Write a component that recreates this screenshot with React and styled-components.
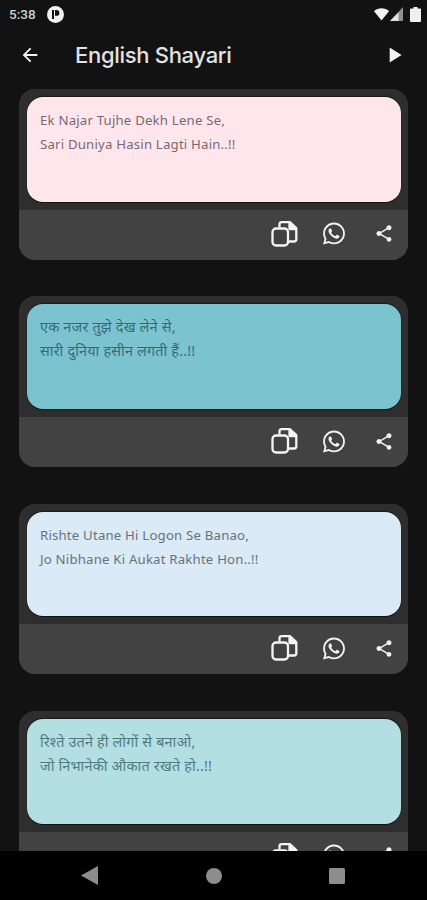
import React from "react";
import styled, { createGlobalStyle } from "styled-components";
import { FaWhatsapp } from "react-icons/fa";
import { MdShare, MdArrowBack, MdPlayArrow } from "react-icons/md";

const Global = createGlobalStyle`
  html, body { margin: 0; padding: 0; background: #121212; }
  * { box-sizing: border-box; }
`;
const Screen = styled.div`
  width: 427px; height: 900px; background: #121212; display: flex; flex-direction: column; overflow: hidden;
  font-family: "Lato", "Noto Sans", sans-serif;
`;
const StatusBar = styled.div`
  height: 28px; flex: none; padding: 0 6px 0 9px; display: flex; align-items: center; justify-content: space-between;
  color: #e4e4e4;
`;
const StatusLeft = styled.div`display: flex; align-items: center; gap: 11px;`;
const Time = styled.span`font: 500 13.5px "Roboto", sans-serif; color: #d0d0d0;`;
const StatusRight = styled.div`display: flex; align-items: center; gap: 1px;`;
const StatusGap = styled.span`width: 5px;`;
const Header = styled.header`
  height: 53px; flex: none; display: flex; align-items: center; padding: 0 20px 0 19px; color: #f0f0f0;
`;
const Title = styled.h1`
  margin: 0 0 0 34px; flex: 1; font: 500 22px "Inter", sans-serif; color: #e2e2e2; letter-spacing: -0.3px;
`;
const HeaderIcon = styled.span`display: flex; color: #f4f4f4;`;
const List = styled.main`
  flex: 1; min-height: 0; overflow: hidden; padding: 8px 19px 0; display: flex; flex-direction: column; gap: 36.7px;
`;
const Card = styled.article`
  flex: none; height: 170.700px; border-radius: 16px; overflow: hidden; background: #2e2e2e; display: flex; flex-direction: column;
`;
const QuoteWrap = styled.div`
  height: 120.700px; flex: none; padding: 8px 7px 8px 8px; background: #2e2e2e;
`;
const Quote = styled.div`
  height: 104.500px; border-radius: 16px; background: ${p => p.$bg}; color: ${p => p.$fg}; padding: 11px 13px;
  font: 400 ${p => (p.$hi ? "14.4px" : "13.2px")}/24px "Noto Sans", "Lato", sans-serif;
  box-shadow: 0 -1px 1px #0007, 0 1px 1px #0009;
`;
const Line = styled.div`white-space: nowrap; letter-spacing: 0.2px; opacity: .75;`;
const Actions = styled.div`
  height: 50px; flex: none; background: #424242; display: flex; align-items: center; justify-content: flex-end; padding: 0 14px 2px 0; color: #f2f2f2;
`;
const ActionIcon = styled.span`
  display: flex; width: ${p => p.$w}px; justify-content: center; margin-left: ${p => p.$ml || 0}px;
`;
const NavBar = styled.nav`
  height: 49px; flex: none; background: #000; display: flex; align-items: center; padding-left: 81px;
`;
const NavSlot = styled.span`display: flex; width: ${p => p.$w}px; justify-content: flex-start;`;

const CopyIcon = () => (
  <svg width="27" height="26" viewBox="0 0 27 26" fill="none" stroke="#f4f4f4" strokeWidth="2.3" strokeLinejoin="round">
    <path d="M8.500 6.500V3.500a2.300 2.300 0 0 1 2.300-2.300h8l6.500 6v11a2.300 2.300 0 0 1-2.300 2.300h-6.500" />
    <path d="M18.500 2v6h6z" fill="#f4f4f4" />
    <rect x="1.500" y="7.500" width="15.500" height="17" rx="3.500" fill="#424242" />
  </svg>
);
const Wifi = () => (
  <svg width="15" height="13" viewBox="0 0 15 13"><path d="M0 3.200C4-.6 11-.6 15 3.200L7.500 12.500z" fill="#f2f2f2" /></svg>
);
const Signal = () => (
  <svg width="13" height="14" viewBox="0 0 13 14">
    <path d="M13 0v14H0z" fill="#8f8f8f" /><path d="M8.500 5v9H0l8-8z" fill="#e4e4e4" />
  </svg>
);
const Battery = () => (
  <svg width="11" height="15" viewBox="0 0 11 15"><path d="M3.500 0h4v1.500H10a1 1 0 0 1 1 1V14a1 1 0 0 1-1 1H1a1 1 0 0 1-1-1V2.500a1 1 0 0 1 1-1h2.500z" fill="#f0f0f0" /></svg>
);
const Badge = () => (
  <svg width="17" height="17" viewBox="0 0 17 17">
    <circle cx="8.500" cy="8.500" r="8.500" fill="#efefef" />
    <rect x="5" y="4" width="2" height="9" fill="#121212" />
    <path d="M8 4h1.500a2.800 2.800 0 0 1 0 5.800H8z" fill="#121212" />
  </svg>
);

const items = [
  { bg: "#ffe6ec", fg: "#4a4048", lines: ["Ek Najar Tujhe Dekh Lene Se,", "Sari Duniya Hasin Lagti Hain..!!"] },
  { bg: "#7cc3d0", fg: "#1f4d5c", hi: true, lines: ["एक नजर तुझे देख लेने से,", "सारी दुनिया हसीन लगती हैं..!!"] },
  { bg: "#daeaf7", fg: "#3e4a52", lines: ["Rishte Utane Hi Logon Se Banao,", "Jo Nibhane Ki Aukat Rakhte Hon..!!"] },
  { bg: "#b3dfe3", fg: "#2f5a60", hi: true, lines: ["रिश्ते उतने ही लोगों से बनाओ,", "जो निभानेकी औकात रखते हो..!!"] },
];

export default function App() {
  return (
    <Screen>
      <Global />
      <StatusBar>
        <StatusLeft><Time>5:38</Time><Badge /></StatusLeft>
        <StatusRight><Wifi /><Signal /><StatusGap /><Battery /></StatusRight>
      </StatusBar>
      <Header>
        <HeaderIcon><MdArrowBack size={22} /></HeaderIcon>
        <Title>English Shayari</Title>
        <HeaderIcon><MdPlayArrow size={26} /></HeaderIcon>
      </Header>
      <List>
        {items.map((it, i) => (
          <Card key={i}>
            <QuoteWrap>
              <Quote $bg={it.bg} $fg={it.fg} $hi={it.hi}>
                {it.lines.map(l => <Line key={l}>{l}</Line>)}
              </Quote>
            </QuoteWrap>
            <Actions>
              <ActionIcon $w={27}><CopyIcon /></ActionIcon>
              <ActionIcon $w={24} $ml={24}><FaWhatsapp size={25} /></ActionIcon>
              <ActionIcon $w={20} $ml={28}><MdShare size={21} /></ActionIcon>
            </Actions>
          </Card>
        ))}
      </List>
      <NavBar>
        <NavSlot $w={125}>
          <svg width="17" height="19" viewBox="0 0 17 19"><path d="M17 0v19L0 9.500z" fill="#8d8d8d" /></svg>
        </NavSlot>
        <NavSlot $w={123}>
          <svg width="16" height="16" viewBox="0 0 16 16"><circle cx="8" cy="8" r="8" fill="#8d8d8d" /></svg>
        </NavSlot>
        <NavSlot $w={16}>
          <svg width="16" height="16" viewBox="0 0 16 16"><rect width="16" height="16" rx="1.500" fill="#8d8d8d" /></svg>
        </NavSlot>
      </NavBar>
    </Screen>
  );
}
